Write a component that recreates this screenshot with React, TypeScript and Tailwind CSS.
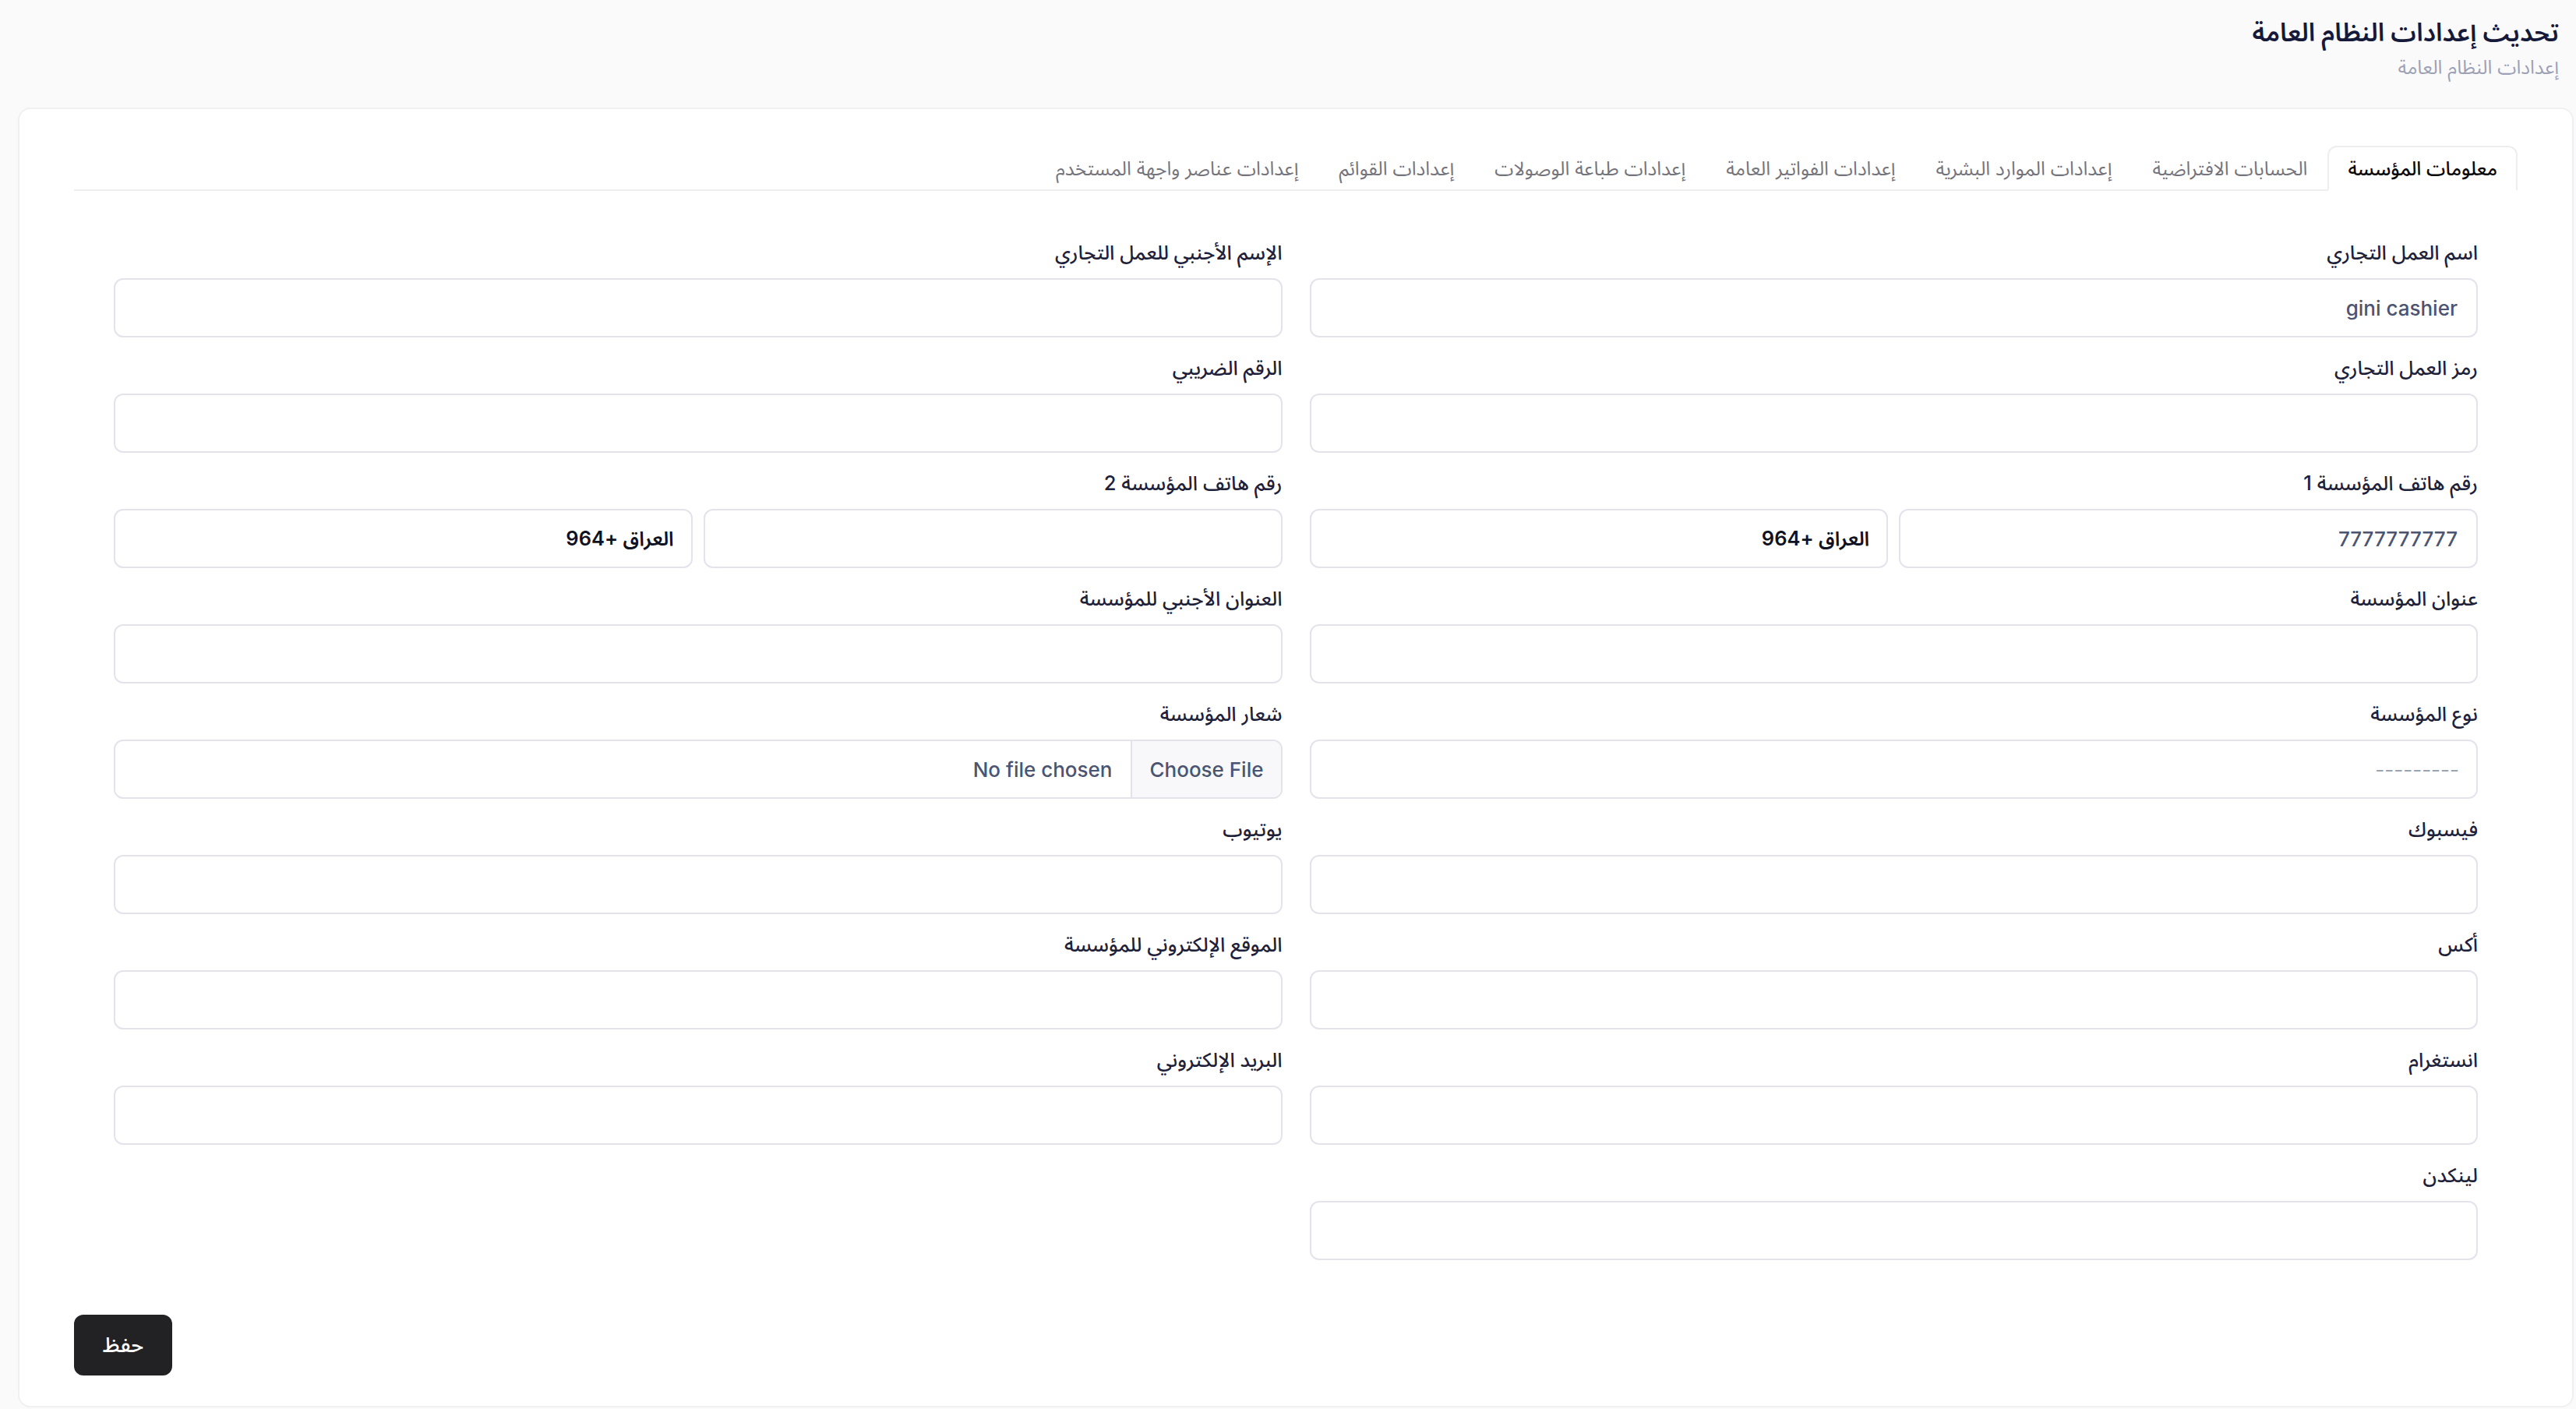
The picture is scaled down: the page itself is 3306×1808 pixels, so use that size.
import React from "react";

const tabs = [
  "معلومات المؤسسة",
  "الحسابات الافتراضية",
  "إعدادات الموارد البشرية",
  "إعدادات الفواتير العامة",
  "إعدادات طباعة الوصولات",
  "إعدادات القوائم",
  "إعدادات عناصر واجهة المستخدم",
];

function Label({ children }: { children: React.ReactNode }) {
  return (
    <div className="h-[37px] leading-[37px] text-[25.5px] font-medium text-[#1d2139] mb-[15px]">
      {children}
    </div>
  );
}

function TextBox({ value }: { value?: string }) {
  return (
    <div className="h-[76px] rounded-[12px] border-2 border-[#e3e3ec] bg-white px-[24px] flex items-center text-[26px] font-medium text-[#4b5470]">
      {value ?? ""}
    </div>
  );
}

function Field({ label, value }: { label: string; value?: string }) {
  return (
    <div>
      <Label>{label}</Label>
      <TextBox value={value} />
    </div>
  );
}

function PhoneField({ label, number }: { label: string; number?: string }) {
  return (
    <div>
      <Label>{label}</Label>
      <div className="grid grid-cols-2 gap-x-[14px]">
        <TextBox value={number} />
        <div className="h-[76px] rounded-[12px] border-2 border-[#e3e3ec] bg-white px-[22px] flex items-center text-[25.5px] font-semibold text-[#0f1222]">
          العراق +964
        </div>
      </div>
    </div>
  );
}

export default function App() {
  return (
    <div
      dir="rtl"
      className="min-h-screen bg-[#fafafa] font-[family-name:Inter,'Noto_Sans_Arabic','Noto_Sans',sans-serif]"
    >
      <header className="pr-[22px] pt-[19px]">
        <h1 className="text-[32.5px] leading-[46px] font-semibold text-[#151a3a]">
          تحديث إعدادات النظام العامة
        </h1>
        <p className="text-[24.5px] leading-[42px] text-[#9ca1b6]">إعدادات النظام العامة</p>
      </header>

      <div className="ml-[23px] mr-[3px] mt-[31px] rounded-[16px] border-2 border-[#f0f0f3] bg-white px-[70px] pt-[47px] pb-[39px]">
        <div className="flex border-b-2 border-[#eeeef1]">
          {tabs.map((t, i) => (
            <div
              key={t}
              className={
                "h-[58px] px-[24px] flex items-center text-[24.5px] -mb-[2px] rounded-t-[12px] " +
                (i === 0
                  ? "border-2 border-b-white border-[#eeeef1] bg-white text-[#09090b] font-medium"
                  : "border-2 border-transparent text-[#74747c]")
              }
            >
              {t}
            </div>
          ))}
        </div>

        <div className="mt-[60px] px-[51px] grid grid-cols-2 gap-x-[35px] gap-y-[20px]">
          <Field label="اسم العمل التجاري" value="gini cashier" />
          <Field label="الإسم الأجنبي للعمل التجاري" />
          <Field label="رمز العمل التجاري" />
          <Field label="الرقم الضريبي" />
          <PhoneField label="رقم هاتف المؤسسة 1" number="7777777777" />
          <PhoneField label="رقم هاتف المؤسسة 2" />
          <Field label="عنوان المؤسسة" />
          <Field label="العنوان الأجنبي للمؤسسة" />
          <div>
            <Label>نوع المؤسسة</Label>
            <div className="h-[76px] rounded-[12px] border-2 border-[#e3e3ec] bg-white px-[22px] flex items-center text-[26px] text-[#9ca3af]">
              ---------
            </div>
          </div>
          <div>
            <Label>شعار المؤسسة</Label>
            <div className="h-[76px] rounded-[12px] border-2 border-[#e3e3ec] bg-white flex items-stretch overflow-hidden text-[26px] font-medium text-[#4b5470]">
              <div className="bg-[#f8f8fa] border-l-2 border-[#e3e3ec] px-[22px] flex items-center">
                Choose File
              </div>
              <div className="px-[24px] flex items-center">No file chosen</div>
            </div>
          </div>
          <Field label="فيسبوك" />
          <Field label="يوتيوب" />
          <Field label="أكس" />
          <Field label="الموقع الإلكتروني للمؤسسة" />
          <Field label="انستغرام" />
          <Field label="البريد الإلكتروني" />
          <Field label="لينكدن" />
          <div />
        </div>

        <div className="mt-[70px] flex justify-end">
          <button className="h-[78px] w-[126px] rounded-[12px] bg-[#222225] text-white text-[27px] font-medium">
            حفظ
          </button>
        </div>
      </div>
    </div>
  );
}
